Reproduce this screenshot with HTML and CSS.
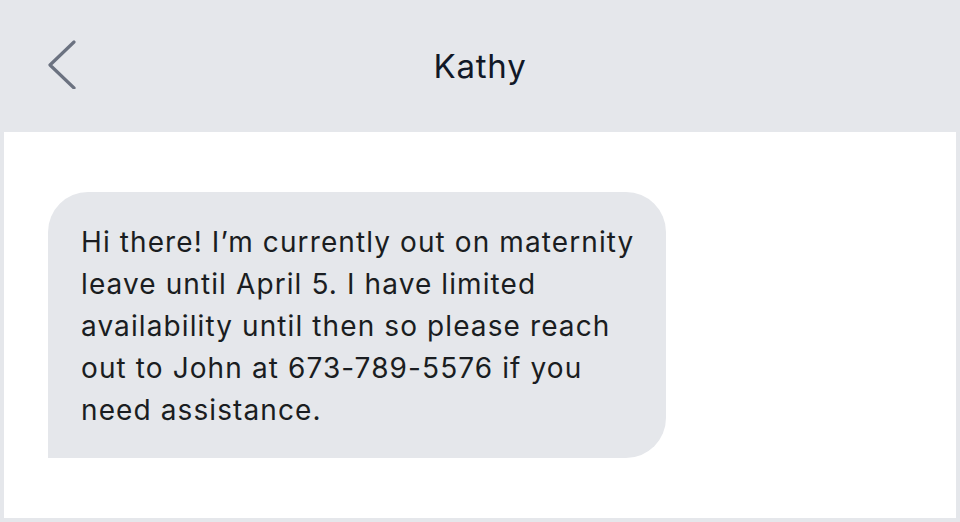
FILE: index.html
```html
<!DOCTYPE html>
<html lang="en">
<head>
<meta charset="utf-8">
<title>Kathy</title>
<link rel="stylesheet" href="styles.css">
</head>
<body>
<div class="app">
  <header class="header">
    <button class="back" aria-label="Back">
      <svg width="30" height="50" viewBox="0 0 30 50" fill="none">
        <path d="M26 3 L2 26 L26 49" stroke="#6b7280" stroke-width="3.2" stroke-linecap="round" stroke-linejoin="round"/>
      </svg>
    </button>
    <h1 class="title">Kathy</h1>
  </header>
  <main class="thread">
    <div class="bubble">Hi there! I’m currently out on maternity leave until April 5. I have limited availability until then so please reach out to John at 673-789-5576 if you need assistance.</div>
  </main>
</div>
</body>
</html>
```

FILE: styles.css
```css
html, body {
  margin: 0;
  padding: 0;
  background: #e5e7eb;
  font-family: Inter, "Noto Sans", sans-serif;
  color: #111827;
}
.app {
  width: 960px;
  height: 522px;
  display: flex;
  flex-direction: column;
}
.header {
  height: 132px;
  position: relative;
  display: flex;
  align-items: center;
  justify-content: center;
  flex-shrink: 0;
}
.back {
  position: absolute;
  left: 48px;
  top: 39px;
  padding: 0;
  border: 0;
  background: none;
  display: block;
}
.back svg { display: block; }
.title {
  margin: 0;
  font-size: 33px;
  font-weight: 400;
  line-height: 1;
  letter-spacing: 0.8px;
  color: #111827;
}
.thread {
  flex: 1;
  margin: 0 4px 4px;
  background: #fff;
  padding: 60px 44px 0;
}
.bubble {
  width: 618px;
  box-sizing: border-box;
  background: #e5e7eb;
  border-radius: 40px 40px 40px 0;
  padding: 29px 26px 27px 33px;
  font-size: 28px;
  line-height: 42px;
  letter-spacing: 1.1px;
  color: #1a1d21;
}
```
